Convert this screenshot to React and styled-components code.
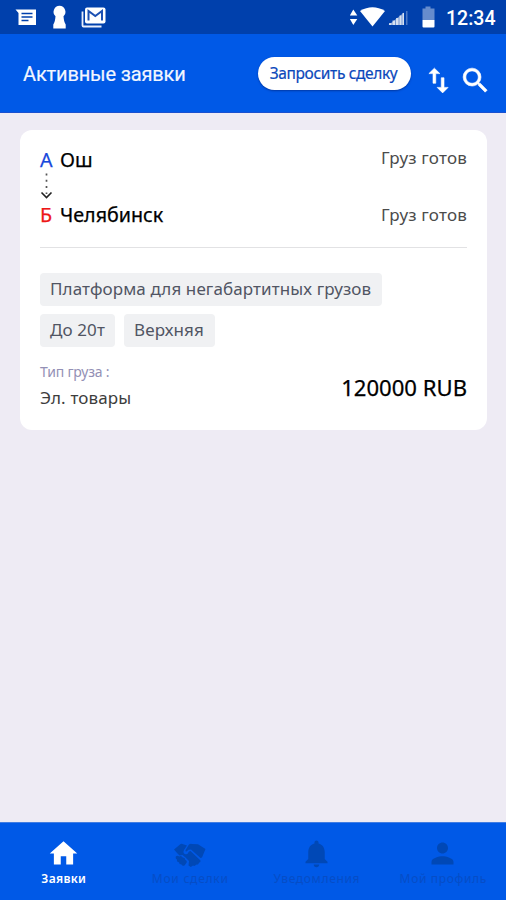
import React from "react";
import styled, { createGlobalStyle } from "styled-components";
import {
  MdHome,
  MdNotifications,
  MdPerson,
  MdSearch,
  MdSwapVert,
} from "react-icons/md";

const GlobalStyle = createGlobalStyle`
  * { box-sizing: border-box; }
  body { margin: 0; background: #eeebf4; }
`;

const Screen = styled.div`
  display: flex;
  flex-direction: column;
  width: 506px;
  height: 900px;
  overflow: hidden;
  background: #eeebf4;
  font-family: "Noto Sans", sans-serif;
`;

const StatusBar = styled.div`
  display: flex;
  justify-content: space-between;
  flex: none;
  height: 34px;
  background: #0040ac;
  color: #fff;
`;

const StatusGraphic = styled.svg`
  display: block;
  flex: none;
`;

const StatusRight = styled.div`
  display: flex;
  padding-right: 10px;
`;

const Clock = styled.span`
  width: 50px;
  font: 500 19.5px/37px Roboto, sans-serif;
  white-space: nowrap;
`;

const Header = styled.header`
  display: flex;
  flex: none;
  height: 79px;
  padding: 23px 14px 0 23px;
  background: #0059e7;
  border-bottom: 1px solid #1a50cf;
  color: #fff;
`;

const Title = styled.h1`
  flex: 1;
  margin: 0;
  font: 400 20px/34px Roboto, sans-serif;
  letter-spacing: -0.15px;
  white-space: nowrap;
  color: #f2f6ff;
  -webkit-text-stroke: 0.2px #f2f6ff;
`;

const RequestButton = styled.button`
  width: 153px;
  height: 33px;
  margin-right: 11px;
  padding: 0 2px 0 0;
  border: 0;
  border-radius: 17px;
  background: #fff;
  box-shadow: 0 1px 2px rgba(0, 30, 110, 0.55);
  color: #0b48bb;
  font: 400 15.5px/33px "Noto Sans", sans-serif;
  letter-spacing: -0.35px;
  white-space: nowrap;
  -webkit-text-stroke: 0.2px #0b48bb;
`;

const HeaderIcon = styled.span`
  display: flex;
  margin: 7px ${(p) => p.$gap}px 0 0;
  font-size: 33px;

  svg path:last-child {
    stroke: #fff;
    stroke-width: 0.45px;
  }
`;

const Content = styled.main`
  flex: 1;
  padding: 17px 19px 0 20px;
`;

const Card = styled.article`
  height: 300px;
  padding: 15px 20px 0;
  border-radius: 12px;
  background: #fff;
`;

const Stop = styled.div`
  display: flex;
  justify-content: space-between;
  height: 30px;
`;

const Place = styled.div`
  display: flex;
  color: #000;
  font-size: 19.7px;
  line-height: 30px;
  -webkit-text-stroke: 0.25px currentColor;
`;

const Marker = styled.span`
  width: 20px;
  color: ${(p) => p.$color};
`;

const Readiness = styled.span`
  color: #4b4b4b;
  font-size: 17px;
  line-height: ${(p) => p.$line}px;
  letter-spacing: 0.2px;
`;

const RouteArrow = styled.svg`
  display: block;
  width: 14px;
  height: 28px;
  margin: -3px 0 0;
`;

const Divider = styled.hr`
  height: 1px;
  margin: 17px 0 25px;
  border: 0;
  background: #e2e2e4;
`;

const Tags = styled.div`
  display: flex;
  flex-wrap: wrap;
  gap: 8px 9px;
  width: 360px;
`;

const Tag = styled.span`
  width: ${(p) => p.$width}px;
  height: 33px;
  padding-left: 10px;
  border-radius: 4px;
  background: #f0f1f3;
  color: #515563;
  font-size: 17px;
  line-height: 32px;
  letter-spacing: 0.11px;
  white-space: nowrap;
`;

const Summary = styled.div`
  display: flex;
  justify-content: space-between;
  margin-top: 13px;
`;

const CargoLabel = styled.div`
  color: #9390b5;
  font-size: 14px;
  line-height: 24px;
  letter-spacing: -0.2px;
`;

const CargoType = styled.div`
  color: #3d3d3d;
  font-size: 17px;
  line-height: 27px;
  letter-spacing: 0.15px;
`;

const Price = styled.div`
  margin-top: 10px;
  color: #000;
  font-size: 22.1px;
  line-height: 34px;
  -webkit-text-stroke: 0.25px #000;
`;

const Nav = styled.nav`
  display: grid;
  grid-template-columns: repeat(4, 1fr);
  flex: none;
  height: 78px;
  border-top: 1px solid #407de3;
  background: #0059e7;
`;

const NavItem = styled.div`
  display: flex;
  flex-direction: column;
  align-items: center;
  padding-top: 14px;
  color: ${(p) => (p.$active ? "#fff" : "#0048b6")};
  font-size: 33px;
`;

const NavLabel = styled.span`
  padding-left: 1px;
  color: ${(p) => (p.$active ? "#fff" : "#064dc6")};
  font-size: 12px;
  font-weight: ${(p) => (p.$active ? 600 : 400)};
  line-height: 18px;
  letter-spacing: ${(p) => p.$track}px;
  white-space: nowrap;
`;

function Handshake() {
  return (
    <svg width="1em" height="1em" viewBox="0 0 33 33" fill="currentColor">
      <path d="M1 12.500L7 7.500Q8 6.500 9.500 7L14 8.500L11 13Q9.500 16 12 17Q14.500 18 16 14.500L17.500 14L27.500 23.500Q28 25.500 26 25.800Q25.500 28 23.200 27.600Q22 29.500 20 28.600L17.800 30L15.500 28.500L16 24L12.500 20.500L9.500 18L6.500 18.500L4.500 16.500Z" />
      <path d="M15.800 7.800Q17 6.500 19 7L25 7.200L32.500 12L29 20.500L27.500 21L18 12.500L15.500 12.800L13.500 14.500Q12 14.500 12.600 13Z" />
      <path d="M2.800 19.500Q4.500 17.800 6.200 19.500Q8.500 18.300 9.700 20.600Q12 20.500 12.300 22.700Q14.500 23.500 13.700 25.600L11.500 28.500Q9.500 29.500 8.500 27.500Q6 27.500 6 25.200Q3.500 25.200 4 22.800Q2 21.500 2.800 19.500Z" />
    </svg>
  );
}

const tabs = [
  { label: "Заявки", Icon: MdHome, active: true, track: 0.3 },
  { label: "Мои сделки", Icon: Handshake, track: 0.75 },
  { label: "Уведомления", Icon: MdNotifications, track: 0.65 },
  { label: "Мой профиль", Icon: MdPerson, track: 0.65 },
];

const tags = [
  { text: "Платформа для негабартитных грузов", width: 342 },
  { text: "До 20т", width: 75 },
  { text: "Верхняя", width: 91 },
];

export default function App() {
  return (
    <Screen>
      <GlobalStyle />
      <StatusBar>
        <StatusGraphic width="120" height="34" fill="#fff">
          <path d="M15.500 9.500H36V25H18.500V13Z" />
          <path d="M21.500 13.500H32.500M21.500 17H32.500M21.500 20.500H28.500" stroke="#0040ac" strokeWidth="1.400" />
          <path d="M59.500 5.800a6 6 0 0 1 4 10.400c.3 3.800 .8 5.800 2.200 8.300v4H53.300v-4c1.400-2.500 1.900-4.500 2.200-8.300a6 6 0 0 1 4-10.400Z" />
          <path d="M82.500 11.500V25.500a1 1 0 0 0 1 1H101.500" fill="none" stroke="#e8eefc" strokeWidth="1.800" />
          <rect x="85" y="7.500" width="20.500" height="16" rx="2" />
          <path d="M88.500 20.500V11L95.300 16L102 11V20.500" fill="none" stroke="#1c50b2" strokeWidth="2" />
        </StatusGraphic>
        <StatusRight>
          <StatusGraphic width="96" height="34" fill="#fff">
            <path d="M3.300 9.500l4 6H-.2ZM3.300 25l4-6H-.2Z" />
            <path d="M10 11Q22.500 3.500 35 11L22.500 26.500Z" />
            <path d="M38.500 25L54 12.500V25Z" opacity=".45" />
            <path d="M39 25v-2h2.500v2ZM42.500 25v-4.500h2.500v4.500ZM46 25v-7h2.500v7ZM49.500 25v-9.500h2v9.500ZM52.500 25v-12h1.500v12Z" opacity=".7" />
            <path d="M56 25V11h1.500v14Z" opacity=".3" />
            <path d="M72.500 8.500h3V6.500h5v2h4V20H72.500Z" opacity=".4" />
            <path d="M72.500 20h12v6.500a1 1 0 0 1-1 1h-10a1 1 0 0 1-1-1Z" />
          </StatusGraphic>
          <Clock>12:34</Clock>
        </StatusRight>
      </StatusBar>

      <Header>
        <Title>Активные заявки</Title>
        <RequestButton>Запросить сделку</RequestButton>
        <HeaderIcon $gap={4}><MdSwapVert /></HeaderIcon>
        <HeaderIcon $gap={0}><MdSearch /></HeaderIcon>
      </Header>

      <Content>
        <Card>
          <Stop>
            <Place><Marker $color="#1748dc">А</Marker>Ош</Place>
            <Readiness $line={26}>Груз готов</Readiness>
          </Stop>
          <RouteArrow viewBox="0 0 14 28" fill="none">
            <path d="M6.500 1.500V22" stroke="#555" strokeWidth="1.700" strokeDasharray="2 4.300" />
            <path d="M1.500 20.500L6.500 25.500L11.500 20.500" stroke="#222" strokeWidth="1.600" />
          </RouteArrow>
          <Stop>
            <Place><Marker $color="#ed1717">Б</Marker>Челябинск</Place>
            <Readiness $line={29}>Груз готов</Readiness>
          </Stop>
          <Divider />
          <Tags>
            {tags.map((t) => (
              <Tag key={t.text} $width={t.width}>{t.text}</Tag>
            ))}
          </Tags>
          <Summary>
            <div>
              <CargoLabel>Тип груза :</CargoLabel>
              <CargoType>Эл. товары</CargoType>
            </div>
            <Price>120000 RUB</Price>
          </Summary>
        </Card>
      </Content>

      <Nav>
        {tabs.map(({ label, Icon, active, track }) => (
          <NavItem key={label} $active={active}>
            <Icon />
            <NavLabel $active={active} $track={track}>{label}</NavLabel>
          </NavItem>
        ))}
      </Nav>
    </Screen>
  );
}
